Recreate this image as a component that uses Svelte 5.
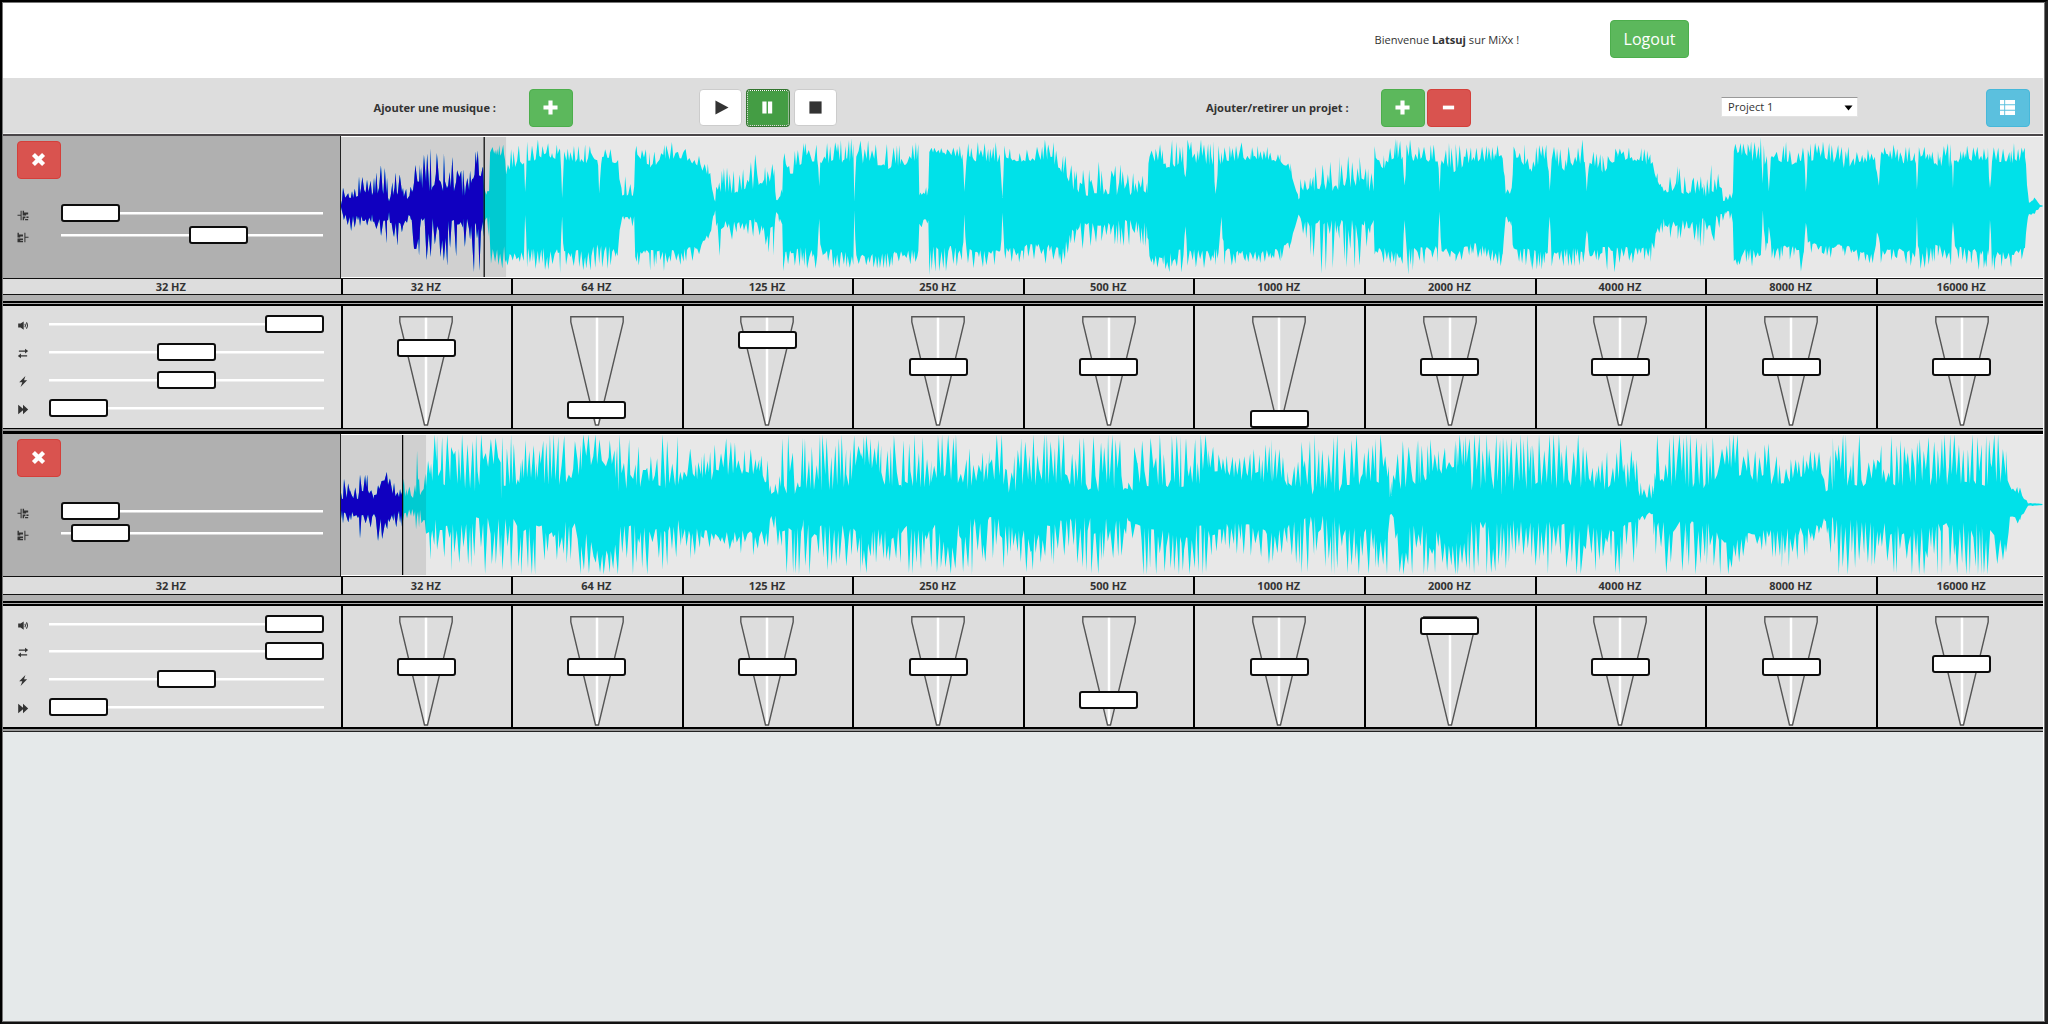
<script>
  const bands = ['32 HZ', '64 HZ', '125 HZ', '250 HZ', '500 HZ', '1000 HZ', '2000 HZ', '4000 HZ', '8000 HZ', '16000 HZ'];

  // Each knot: x, body above, peak above, body below, peak below
  const song1 = [
    [0, 1, 1, 1, 1], [2, 8, 18, 8, 20], [16, 8, 18, 10, 30], [19, 12, 38, 10, 27], [31, 9, 26, 8, 16], [33, 12, 44, 12, 20],
    [46, 12, 36, 14, 36], [48, 4, 10, 4, 10], [52, 10, 34, 12, 44], [62, 10, 30, 12, 34], [66, 5, 14, 6, 16], [71, 8, 24, 10, 36], [73, 22, 42, 30, 58],
    [78, 22, 40, 28, 58], [80, 14, 58, 12, 48], [98, 14, 60, 12, 60], [116, 12, 50, 12, 58], [122, 8, 36, 12, 40], [128, 14, 40, 12, 48], [131, 24, 54, 18, 64],
    [142, 30, 56, 12, 64], [143, 10, 28, 12, 30], [148, 12, 24, 10, 30], [149, 50, 63, 40, 56], [163, 50, 60, 40, 64], [165, 30, 36, 48, 60],
    [170, 38, 58, 48, 62], [183, 40, 64, 44, 54], [184, 6, 14, 6, 12], [186, 45, 64, 42, 60], [219, 46, 66, 42, 66], [221, 8, 14, 10, 14],
    [223, 46, 58, 44, 60], [244, 42, 60, 44, 66], [256, 46, 68, 38, 60], [258, 12, 20, 40, 60], [261, 48, 62, 40, 62], [275, 42, 60, 40, 60], [281, 10, 14, 10, 18],
    [284, 10, 28, 10, 14], [293, 10, 22, 10, 22], [294, 52, 60, 44, 56], [309, 38, 56, 44, 66], [324, 46, 62, 44, 64], [343, 46, 64, 42, 56],
    [356, 40, 52, 38, 54], [369, 28, 40, 26, 40], [372, 10, 16, 10, 12], [374, 3, 5, 4, 6], [375, 14, 42, 14, 52], [396, 12, 32, 16, 26], [414, 16, 50, 12, 30], [433, 20, 42, 20, 52],
    [435, 4, 6, 4, 6], [441, 12, 18, 18, 30], [442, 44, 60, 46, 67], [450, 30, 62, 44, 58], [463, 44, 64, 40, 60], [476, 44, 62, 44, 64], [478, 14, 24, 12, 18],
    [480, 42, 62, 42, 60], [512, 44, 66, 46, 64], [513, 4, 8, 4, 8], [515, 44, 66, 48, 60], [550, 36, 64, 46, 62], [577, 46, 62, 42, 60], [578, 10, 14, 14, 24],
    [587, 10, 20, 12, 20], [588, 54, 58, 40, 67], [612, 50, 58, 40, 62], [621, 46, 60, 42, 62], [623, 12, 18, 8, 12], [625, 44, 62, 42, 62], [659, 40, 62, 44, 60], [661, 4, 8, 6, 10],
    [663, 46, 60, 42, 52], [682, 44, 54, 38, 60], [706, 46, 68, 38, 56], [722, 32, 52, 40, 58], [732, 16, 36, 20, 36], [736, 10, 42, 15, 46], [760, 10, 42, 18, 34],
    [780, 10, 46, 13, 40], [806, 12, 34, 16, 42], [808, 46, 60, 50, 56], [824, 38, 66, 48, 66], [842, 40, 62, 40, 67], [844, 24, 30, 14, 20], [846, 44, 66, 44, 60],
    [872, 40, 66, 42, 62], [874, 5, 12, 42, 60], [877, 44, 60, 44, 54], [880, 40, 58, 10, 20], [883, 44, 60, 42, 62], [910, 46, 66, 46, 56], [939, 44, 54, 42, 56],
    [949, 34, 42, 34, 44], [957, 6, 10, 8, 12], [960, 12, 38, 14, 22], [974, 12, 38, 14, 66], [998, 16, 50, 12, 60], [1018, 20, 48, 14, 64], [1032, 12, 34, 14, 22],
    [1033, 50, 60, 42, 50], [1043, 34, 56, 42, 60], [1054, 48, 66, 46, 60], [1061, 44, 62, 40, 60], [1063, 14, 20, 14, 20], [1065, 44, 66, 42, 67], [1096, 44, 60, 40, 60],
    [1098, 14, 20, 4, 8], [1100, 40, 62, 40, 56], [1114, 32, 60, 46, 60], [1130, 44, 60, 36, 50], [1161, 44, 64, 46, 62], [1164, 12, 16, 10, 14], [1170, 12, 20, 14, 22], [1172, 50, 60, 42, 54],
    [1190, 34, 60, 42, 64], [1205, 48, 62, 46, 64], [1208, 14, 20, 8, 14], [1210, 44, 60, 46, 64], [1224, 34, 56, 42, 60], [1243, 44, 66, 42, 60], [1245, 14, 24, 20, 30],
    [1248, 42, 54, 44, 58], [1261, 32, 52, 40, 64], [1276, 46, 60, 40, 66], [1300, 44, 58, 42, 52], [1309, 38, 52, 38, 56], [1316, 24, 32, 22, 28], [1322, 12, 18, 12, 34],
    [1336, 12, 42, 14, 32], [1348, 12, 50, 14, 34], [1362, 8, 26, 12, 40], [1370, 12, 42, 12, 54], [1380, 5, 18, 6, 16], [1384, 5, 10, 5, 12], [1391, 8, 14, 5, 18],
    [1392, 54, 62, 54, 60], [1406, 46, 62, 40, 60], [1419, 40, 66, 44, 56], [1421, 20, 60, 4, 8], [1424, 44, 66, 44, 56], [1427, 14, 28, 20, 30], [1430, 48, 58, 42, 54],
    [1448, 40, 66, 38, 56], [1462, 46, 60, 46, 66], [1464, 12, 20, 10, 18], [1466, 44, 60, 34, 46], [1480, 48, 68, 40, 52], [1502, 38, 58, 38, 50], [1532, 44, 56, 48, 60],
    [1535, 34, 40, 26, 34], [1537, 20, 26, 26, 32], [1539, 50, 60, 44, 58], [1562, 42, 60, 42, 56], [1573, 46, 60, 46, 60], [1575, 16, 24, 10, 20], [1577, 50, 62, 42, 66],
    [1596, 40, 54, 38, 52], [1609, 38, 66, 44, 60], [1611, 16, 34, 12, 16], [1613, 42, 60, 40, 52], [1646, 46, 58, 44, 66], [1648, 10, 18, 10, 20], [1650, 44, 58, 46, 64],
    [1672, 42, 62, 46, 60], [1683, 48, 60, 40, 52], [1685, 20, 24, 14, 18], [1687, 3, 4, 8, 10], [1694, 6, 11, 4, 8], [1698, 1, 1, 1, 1], [1701, 0.5, 0.5, 0.5, 0.5]
  ];
  const song2 = [
    [0, 4, 12, 6, 14], [3, 6, 24, 6, 24], [9, 6, 22, 6, 16], [17, 5, 18, 5, 18], [19, 14, 34, 10, 34], [27, 12, 28, 10, 24], [33, 5, 12, 8, 20], [37, 12, 30, 14, 44],
    [47, 18, 34, 12, 24], [53, 8, 22, 6, 24], [58, 6, 14, 6, 18], [61, 10, 26, 10, 24], [66, 6, 28, 6, 20], [70, 4, 14, 4, 14], [74, 8, 20, 5, 16], [76, 14, 56, 6, 36], [79, 5, 14, 5, 20], [85, 18, 32, 16, 34],
    [90, 24, 72, 24, 72], [96, 12, 68, 10, 44], [110, 20, 72, 20, 66], [135, 12, 70, 12, 60], [142, 26, 72, 14, 68], [160, 4, 66, 10, 60], [170, 10, 70, 10, 70], [180, 24, 60, 28, 70],
    [195, 22, 72, 18, 70], [218, 16, 64, 16, 60], [240, 30, 70, 20, 70], [256, 38, 72, 46, 72], [274, 12, 70, 18, 68], [295, 18, 64, 20, 70], [326, 14, 68, 24, 68],
    [337, 18, 70, 12, 60], [341, 20, 34, 24, 36], [349, 30, 66, 24, 56], [360, 22, 48, 24, 44], [375, 24, 66, 28, 42], [392, 30, 64, 24, 44], [418, 30, 48, 28, 54],
    [425, 20, 60, 20, 60], [429, 10, 20, 10, 16], [434, 12, 26, 10, 26], [441, 5, 68, 10, 68], [462, 14, 70, 14, 70], [480, 14, 70, 16, 64], [505, 14, 70, 20, 72],
    [520, 40, 66, 28, 70], [540, 20, 70, 22, 62], [560, 16, 72, 22, 68], [590, 12, 64, 14, 60], [604, 28, 72, 34, 70], [618, 14, 68, 16, 70], [632, 8, 48, 14, 70],
    [648, 24, 70, 10, 60], [664, 8, 68, 16, 60], [690, 16, 72, 28, 68], [720, 20, 70, 14, 60], [754, 10, 68, 12, 66], [780, 16, 72, 10, 60], [787, 10, 22, 8, 20],
    [796, 18, 72, 20, 72], [840, 16, 68, 30, 68], [858, 14, 72, 18, 72], [867, 34, 70, 26, 70], [880, 32, 48, 20, 48], [900, 22, 46, 16, 50], [930, 22, 66, 28, 66],
    [946, 18, 44, 20, 42], [960, 8, 66, 14, 66], [973, 8, 72, 8, 62], [985, 14, 40, 12, 60], [993, 10, 72, 10, 72], [1010, 20, 70, 22, 66], [1035, 14, 68, 24, 70],
    [1050, 6, 24, 8, 18], [1058, 14, 68, 20, 70], [1077, 20, 64, 18, 72], [1098, 30, 72, 26, 70], [1115, 30, 72, 38, 70], [1125, 14, 70, 12, 62], [1145, 14, 72, 16, 70],
    [1160, 10, 70, 14, 62], [1190, 14, 72, 18, 68], [1220, 16, 70, 16, 66], [1255, 14, 68, 18, 66], [1292, 16, 60, 16, 68], [1298, 8, 24, 10, 18], [1311, 5, 18, 5, 14],
    [1314, 20, 72, 16, 64], [1345, 16, 70, 16, 68], [1365, 14, 66, 16, 70], [1388, 36, 72, 40, 72], [1406, 22, 66, 28, 44], [1425, 20, 60, 24, 44], [1440, 20, 40, 24, 64],
    [1470, 30, 54, 22, 44], [1484, 12, 24, 12, 20], [1491, 8, 72, 10, 66], [1510, 18, 70, 14, 68], [1540, 18, 68, 18, 62], [1570, 18, 64, 24, 70], [1600, 18, 70, 18, 68],
    [1640, 18, 72, 18, 70], [1664, 20, 68, 40, 70], [1668, 14, 20, 12, 18], [1678, 10, 18, 12, 20], [1686, 1, 2, 1, 2], [1701, 0.6, 0.6, 0.6, 0.6]
  ];

  // Jagged closed outline around the middle line: runs of low body broken by tall spikes
  function outline(knots, mid, seed, step, tallness) {
    let s = seed;
    const rand = () => {
      s = (s + 0x6d2b79f5) | 0;
      let v = Math.imul(s ^ (s >>> 15), 1 | s);
      v = (v + Math.imul(v ^ (v >>> 7), 61 | v)) ^ v;
      return ((v ^ (v >>> 14)) >>> 0) / 4294967296;
    };
    const side = (lo, dir) => {
      const pts = [];
      let k = 0;
      let tall = false;
      let x = 0;
      while (x < 1701) {
        while (k < knots.length - 2 && knots[k + 1][0] <= x) k++;
        const a = knots[k];
        const b = knots[k + 1];
        let t = Math.min(1, (x - a[0]) / (b[0] - a[0]));
        if (b[lo] < a[lo] * 0.5 && b[0] - a[0] > 8 && b[0] - x > 2) t = 0;
        const body = a[lo] + (b[lo] - a[lo]) * t;
        const peak = a[lo + 1] + (b[lo + 1] - a[lo + 1]) * t;
        tall = !tall && rand() < tallness;
        const r = tall ? 0.25 + Math.pow(rand(), 0.45) * 0.85 : rand() * rand() * 0.6;
        pts.push(x.toFixed(1) + ' ' + (mid + dir * Math.min(70, body + (peak - body) * r)).toFixed(1));
        let next = x + (b[0] - a[0] < 4 ? 1 : step * (0.5 + rand()));
        if (x < b[0] && next > b[0]) next = b[0];
        x = next;
      }
      pts.push('1701 ' + mid);
      return pts;
    };
    return 'M' + [...side(1, -1), ...side(3, 1).reverse()].join('L') + 'Z';
  }

  const tracks = [
    {
      id: 'one', wave: outline(song1, 69, 77, 1.6, 0.55), played: 142.5, buffered: 165, start: 0, end: 63.1,
      controls: [100, 50, 50, 0], eq: [348.3, 410, 340.2, 366.5, 366.5, 418.5, 366.5, 366.5, 366.5, 366.5].map((y) => y - 306)
    },
    {
      id: 'two', wave: outline(song2, 69.5, 913, 2, 0.72), played: 61, buffered: 85, start: 0, end: 5,
      controls: [100, 100, 50, 0], eq: [666.5, 666.5, 666.5, 666.5, 699.5, 666.5, 625.7, 666.5, 666.5, 664.3].map((y) => y - 606)
    }
  ];
  const icons = ['volume', 'loop', 'flash', 'forward'];
</script>

{#snippet icon(name)}
  <svg class="icon {name}" viewBox="0 0 16 16" aria-hidden="true">
    {#if name === 'plus'}
      <path d="M5.800 .5h4.400v5.300h5.300v4.400h-5.300v5.300H5.800v-5.300H.5V5.800h5.300z" />
    {:else if name === 'minus'}
      <path d="M2 6h12v4H2z" />
    {:else if name === 'remove'}
      <path d="M4.200 1 8 4.800 11.800 1 15 4.200 11.200 8l3.800 3.800-3.200 3.200L8 11.200 4.200 15 1 11.800 4.800 8 1 4.200z" />
    {:else if name === 'play'}
      <path d="M1.500 .5v15L15.500 8z" />
    {:else if name === 'pause'}
      <path d="M2.500 1.500H7v13H2.500zM8.500 1.500H13v13H8.500z" />
    {:else if name === 'stop'}
      <path d="M1.500 1.500h13v13h-13z" />
    {:else if name === 'list'}
      <path d="M0 0h4.500v4.600H0zM5.500 0H16v4.600H5.500zM0 5.700h4.500v4.600H0zM5.500 5.700H16v4.600H5.500zM0 11.400h4.500V16H0zM5.500 11.400H16V16H5.500z" />
    {:else if name === 'volume'}
      <path d="M1 5h3.500L9 2v12l-4.500-3H1z" />
      <path class="line" d="M10.800 5.500q1.500 2.500 0 5M13 3.500q3 4.500 0 9" />
    {:else if name === 'loop'}
      <path d="M2 3.500h9V1l4.500 3.500L11 8V5.500H2zM14 10.500H5V8L.5 11.500 5 15v-2.500h9z" />
    {:else if name === 'flash'}
      <path d="M11.500 0 2.500 9h4.500L4.500 16l9.500-9.800H9.500z" />
    {:else if name === 'forward'}
      <path d="M1 1 8 7V1l7.500 7L8 15V9l-7 6z" />
    {:else if name === 'cut-start'}
      <path d="M0 7h4.500V1H6v14H4.500V8.500H0zM7.500 1h2v2.500h6v3h-3V8h-5zM7.500 9.500h4V12h-2v3h-2zM13 9.500h3v2h-3zM11 13h4.500v2H11z" />
    {:else if name === 'cut-end'}
      <path d="M16 8.500h-4.500V15H10V1h1.500v6H16zM0 1h2v2.500h6v3H4V8H0zM0 9.500h8V12H4v1h4v2H0z" />
    {/if}
  </svg>
{/snippet}

{#snippet slider(value)}
  <div class="slider"><div class="run"><span class="thumb" style:left="{value}%"></span></div></div>
{/snippet}

<div class="app">
  <header>
    <p>Bienvenue <b>Latsuj</b> sur MiXx !</p>
    <button class="btn green logout">Logout</button>
  </header>

  <nav>
    <span class="caption music">Ajouter une musique :</span>
    <button class="btn green" aria-label="Ajouter une musique">{@render icon('plus')}</button>
    <div class="transport">
      <button class="btn plain" aria-label="Play">{@render icon('play')}</button>
      <button class="btn active" aria-label="Pause">{@render icon('pause')}</button>
      <button class="btn plain" aria-label="Stop">{@render icon('stop')}</button>
    </div>
    <span class="caption project">Ajouter/retirer un projet :</span>
    <div class="pair">
      <button class="btn green" aria-label="Ajouter un projet">{@render icon('plus')}</button>
      <button class="btn red" aria-label="Retirer un projet">{@render icon('minus')}</button>
    </div>
    <div class="select">
      <span>Project 1</span>
      <svg viewBox="0 0 8 6"><path d="M0 .5h8L4 5.500z" /></svg>
    </div>
    <button class="btn blue" aria-label="Liste">{@render icon('list')}</button>
  </nav>

  {#each tracks as t}
    <section class="track {t.id}">
      <div class="top">
        <div class="panel">
          <button class="btn red" aria-label="Supprimer">{@render icon('remove')}</button>
          <div class="row">{@render icon('cut-start')}{@render slider(t.start)}</div>
          <div class="row">{@render icon('cut-end')}{@render slider(t.end)}</div>
        </div>
        <svg class="wave" viewBox="0 0 1701 140" preserveAspectRatio="none">
          <clipPath id="played-{t.id}"><rect width={t.played} height="140" /></clipPath>
          <path class="todo" d={t.wave} />
          <rect class="shade" width={t.buffered} height="140" />
          <path class="done" d={t.wave} clip-path="url(#played-{t.id})" />
          <rect class="cursor" x={t.played} width="1.200" height="140" />
        </svg>
      </div>
      <div class="labels">
        <span>32 HZ</span>
        {#each bands as band}<span>{band}</span>{/each}
      </div>
      <div class="strip"></div>
      <div class="double"></div>
      <div class="mixer">
        <div class="controls">
          {#each icons as name, i}
            <div class="row">{@render icon(name)}{@render slider(t.controls[i])}</div>
          {/each}
        </div>
        {#each t.eq as y}
          <div class="band">
            <svg class="cone" viewBox="0 0 54 110">
              <path class="axis" d="M27 1v108" />
              <path class="edge" d="M.8.800h52.400v5L28.500 109h-3L.8 5.800z" />
            </svg>
            <span class="thumb" style:top="{y}px"></span>
          </div>
        {/each}
      </div>
      <div class="rule"></div>
    </section>
  {/each}
</div>

<style>
  :global(body) { margin: 0; }
  .app {
    box-sizing: border-box; width: 2048px; height: 1024px; overflow: hidden;
    border: 2px solid #000; border-right-width: 3px; border-color: #000 #222 #111 #000;
    padding-right: 2px; background: #e5e9ea;
    box-shadow: inset 0 0 0 1px #777, inset -2px 0 0 #fff;
    font: 11.100px 'Open Sans', 'Noto Sans', sans-serif; color: #333;
  }
  header {
    display: flex; align-items: center; height: 75px; margin: 1px 0 0 1px;
    padding: 0 0 3px 1371.500px; background: #fff; box-sizing: border-box;
  }
  p { margin: 0; width: 235.500px; white-space: nowrap; }
  .btn {
    box-sizing: border-box; display: flex; align-items: center; justify-content: center; flex: none;
    width: 44px; height: 38px; padding: 0; border: 1px solid; border-radius: 4px; color: #fff; font: inherit;
  }
  .green { background: #5cb85c; border-color: #4cae4c; }
  .red { background: #d9534f; border-color: #d43f3a; }
  .blue { background: #5bc0de; border-color: #46b8da; }
  .plain { width: 43px; height: 37px; background: #fff; border-color: #ccc; color: #333; }
  .active { background: #449d44; border: 2px solid #32752f; outline: 1px dotted #fff; outline-offset: -2px; }
  .logout { width: 79px; font-size: 16px; padding-bottom: 1px; }
  nav {
    display: flex; align-items: center; height: 56px; margin-left: 1px; padding: 4px 0 0 370.500px;
    box-sizing: border-box; background: #ddd; border-bottom: 1px solid #eee;
  }
  .caption { font-weight: 700; white-space: nowrap; margin-top: -1px; }
  .music { width: 155.500px; }
  .transport { display: flex; align-items: center; gap: 4px; margin-left: 126px; }
  .project { margin-left: 369px; width: 175px; }
  .pair { display: flex; gap: 2px; }
  .select {
    display: flex; align-items: center; justify-content: space-between; box-sizing: border-box;
    width: 137px; height: 20px; margin: 0 127.500px 0 250px; padding: 0 4px 0 6px; background: #fff;
    border: 1px solid #e3e3e3; border-top-color: #999; margin-top: -2px;
  }
  .select svg { width: 9px; height: 6px; fill: #000; margin-top: 3px; }
  .icon { width: 15px; height: 15px; fill: currentColor; flex: none; overflow: visible; }
  .btn .icon { margin: 0 1px 1px 0; }
  .btn .play { margin-left: 2px; }
  .list { width: 17px; }
  .line { fill: none; stroke: currentColor; stroke-width: 1.500; }

  .track { margin-left: 1px; }
  .one { border-top: 2px solid #4a4649; }
  .top { display: flex; height: 142px; }
  .panel { width: 338px; flex: none; box-sizing: border-box; background: #b0b0b0; padding: 5px 17.500px 0 13.500px; border-right: 1px solid #222; }
  .panel .btn { margin-bottom: 23px; }
  .panel .row { height: 22px; }
  .row { display: flex; align-items: center; }
  .row .icon { width: 12px; height: 11px; margin-top: 4px; }
  .panel .slider { margin-left: 32.500px; }
  .slider { flex: 1; height: 3px; background: linear-gradient(#fff, #fff) 0 0 / 100% 2.500px no-repeat; }
  .run { position: relative; margin-right: 58px; height: 3px; }
  .thumb {
    position: absolute; box-sizing: border-box; width: 59px; height: 18px; background: #fff;
    border: 2px solid #0d0d0d; border-radius: 3px;
  }
  .run .thumb { top: -8px; margin-left: -.5px; }
  .wave { display: block; flex: 1; min-width: 0; height: 140px; background: #e8e8e8; border: solid #fff; border-width: 1px 0; }
  .todo { fill: #00e1e9; }
  .shade { fill: rgba(0, 0, 0, .1); }
  .done { fill: #1000c0; }
  .cursor { fill: #000; }
  .labels, .mixer { display: grid; grid-template-columns: 337.500px repeat(10, 170.600px); overflow: hidden; }
  .labels { height: 15px; border: solid #111; border-width: 1px 0; font-weight: 700; font-size: 11px; }
  .two .labels { height: 17px; }
  .labels span { display: flex; align-items: center; justify-content: center; box-sizing: border-box; background: #ddd; padding-right: 2px; }
  .two .labels span { padding-bottom: 1px; }
  .labels span + span, .band { border-left: 2px solid #000; }
  .strip { height: 6px; background: #b0b0b0; }
  .double { height: 1px; border: solid #000; border-width: 2px 0; background: #aaa; }
  .mixer { height: 122px; background: #ddd; }
  .two .mixer { height: 121px; }
  .controls { padding: 4.500px 17px 0 14px; }
  .controls .row { height: 28px; }
  .two .controls .row { height: 27.600px; }
  .controls .slider { margin-left: 20px; }
  .controls .icon { margin-top: 2px; }
  .band { position: relative; display: flex; justify-content: center; }
  .cone { width: 54px; height: 110px; margin: 10px 1px 0 0; }
  .two .cone { margin-top: 9.500px; }
  .axis { stroke: #fff; stroke-width: 2.500; }
  .edge { fill: none; stroke: #555; stroke-width: 1.400; }
  .band .thumb { left: calc(50% - 30px); transform: translateY(-50%); }
  .rule { height: 2px; border: solid #000; border-width: 1px 0 3px; background: #999; }
  .two .rule { border-width: 2px 0 1px; border-bottom-color: #222; }
</style>
